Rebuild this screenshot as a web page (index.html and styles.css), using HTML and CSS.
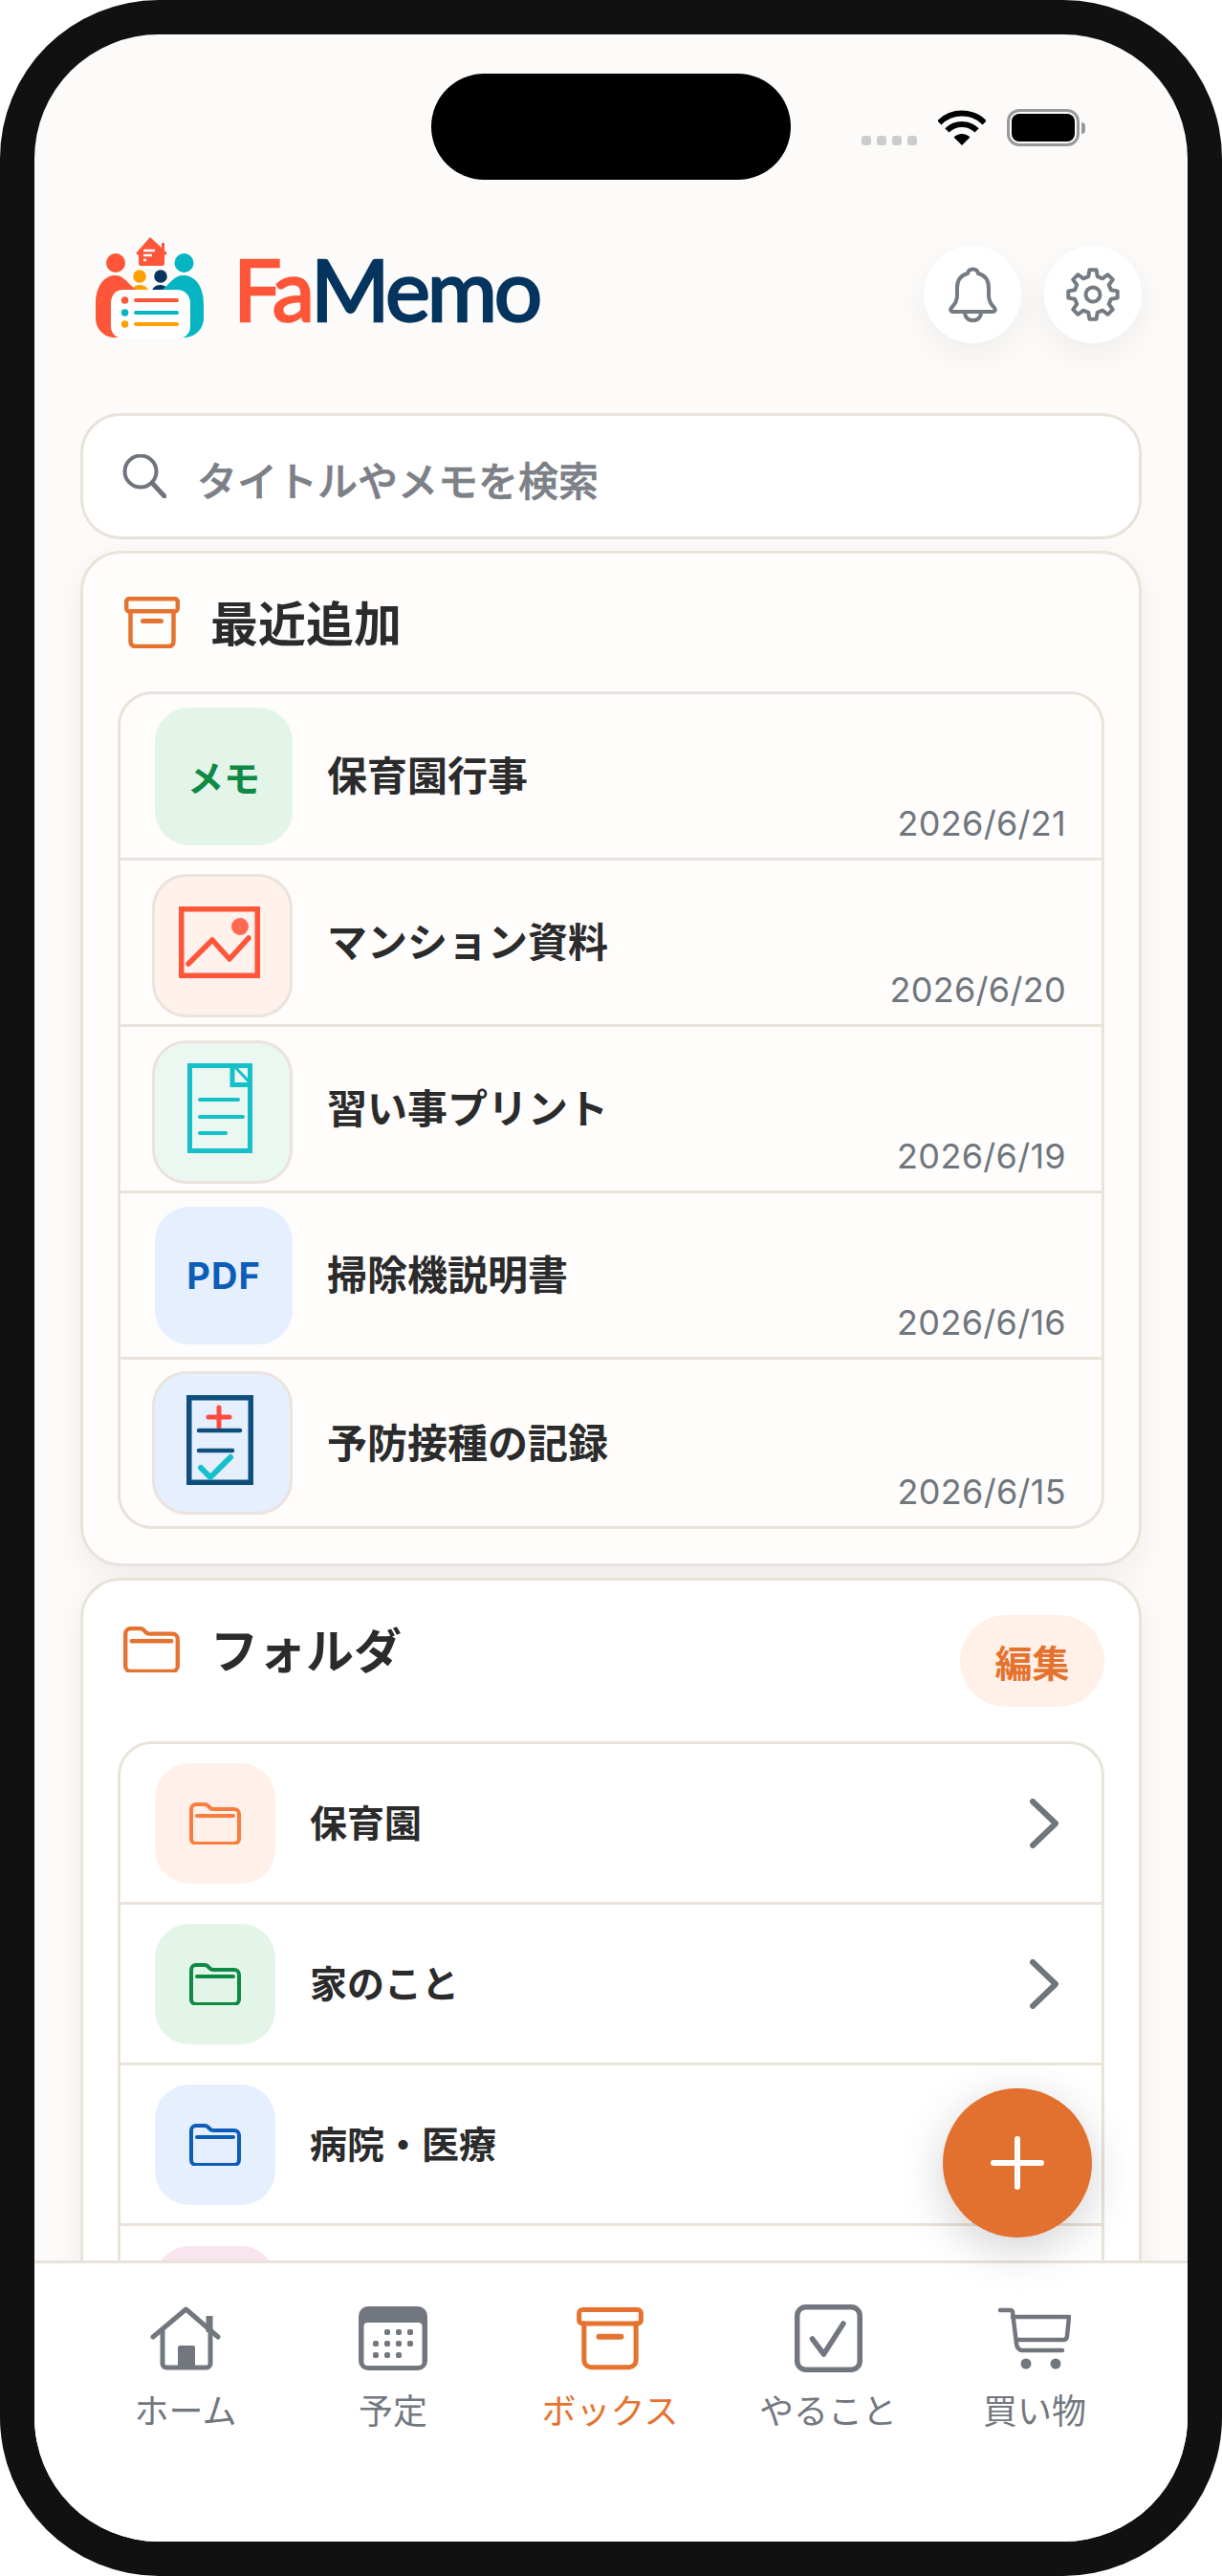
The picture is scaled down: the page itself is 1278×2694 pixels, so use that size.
FILE: index.html
```html
<!DOCTYPE html>
<html lang="ja">
<head>
  <meta charset="UTF-8" />
  <title>FaMemo</title>
  <meta name="viewport" content="width=device-width, initial-scale=1.0" />
  <link rel="stylesheet" href="styles.css">
</head>
<body>
  <div class="phone">
    <div class="screen">

      <div class="status-bar">
        <div class="island"></div>
        <div class="status-icons">
          <div class="signal"><span></span><span></span><span></span><span></span></div>
          <svg class="wifi" width="50" height="37" viewBox="0 0 50 37" fill="none" stroke="#000" stroke-width="6">
            <path d="M1.3 13.3a33.5 33.5 0 0 1 47.4 0" />
            <path d="M9.4 21.4a22 22 0 0 1 31.2 0" />
            <path d="M25 37l-8.5-8.5a12 12 0 0 1 17 0z" fill="#000" stroke="none" />
          </svg>
          <div class="battery"><div class="battery-level"></div></div>
          <div class="battery-tip"></div>
        </div>
      </div>

      <main class="content">
        <header class="app-header">
          <div class="logo">
            <svg width="113" height="105" viewBox="0 0 113 105">
              <path d="M57 0l12 11V6h3v8l3 3-3 2v9a2 2 0 0 1-2 2H47a2 2 0 0 1-2-2V19l-3-2z" fill="#ff5539" />
              <path d="M50 14h12M50 19h9M50 24h3" stroke="#fff" stroke-width="2.4" />
              <circle cx="21" cy="27" r="10" fill="#ff5539" />
              <circle cx="92.500" cy="27" r="10" fill="#05b5c2" />
              <circle cx="46" cy="41" r="6.800" fill="#ffa000" />
              <circle cx="68" cy="41" r="6.800" fill="#05355e" />
              <path d="M38 56c1-8 15-8 17 0z" fill="#ffa000" />
              <path d="M59 56c2-8 15-8 17 0z" fill="#05355e" />
              <path d="M0 70C0 50 10 40 20 40c10 0 13 8 22 15v50H20C8 105 0 95 0 85z" fill="#ff5539" />
              <path d="M113 70c0-20-10-30-21-30-10 0-14 8-22 15v50h22c13 0 21-10 21-20z" fill="#05b5c2" />
              <path d="M24 105c-5-2-8-6-8-12V69c0-8 5-14 13-14h56c8 0 14 6 14 14v24c0 6-3 10-8 12z" fill="#fff" />
              <circle cx="30.600" cy="66" r="3.800" fill="#ff5539" />
              <circle cx="30.600" cy="79" r="3.800" fill="#05b5c2" />
              <circle cx="30.600" cy="91" r="3.800" fill="#ffa000" />
              <path d="M42 66h43" stroke="#ff5539" stroke-width="4" stroke-linecap="round" />
              <path d="M42 79h43" stroke="#05b5c2" stroke-width="4" stroke-linecap="round" />
              <path d="M42 91h43" stroke="#ffa000" stroke-width="4" stroke-linecap="round" />
            </svg>
            <div class="logo-text"><span class="logo-fa">Fa</span><span class="logo-memo">Memo</span></div>
          </div>
          <div class="header-buttons">
            <button class="round-button">
              <svg width="53" height="58" viewBox="0 0 53 58" fill="none" stroke="#757b83" stroke-width="4" stroke-linejoin="round">
                <path d="M26.500 2.500c-3 0-5 2-5.500 4.500C13.500 9 10 15 10 22v8c0 6-2.500 9-6 13-1.500 2-.5 4 2 4h41c2.500 0 3.500-2 2-4-3.500-4-6-7-6-13v-8c0-7-3.500-13-11-15-.5-2.500-2.500-4.500-5.500-4.500z" />
                <path d="M18 47c0 6 3.500 9 8.500 9s8.500-3 8.500-9" />
              </svg>
            </button>
            <button class="round-button">
              <svg width="56" height="56" viewBox="0 0 56 56" fill="none" stroke="#757b83" stroke-width="4" stroke-linejoin="round">
                <path d="M23.300 9.100L24.400 2.300H31.600L32.700 9.100L38 11.300L43.600 7.200L48.800 12.400L44.700 18L46.900 23.300L53.700 24.400V31.600L46.900 32.700L44.700 38L48.800 43.600L43.600 48.800L38 44.700L32.700 46.900L31.600 53.700H24.400L23.300 46.900L18 44.700L12.400 48.800L7.200 43.600L11.300 38L9.100 32.700L2.300 31.600V24.400L9.100 23.300L11.300 18L7.200 12.400L12.400 7.200L18 11.300z" />
                <circle cx="28" cy="28" r="7.500" />
              </svg>
            </button>
          </div>
        </header>

        <div class="search-box">
          <svg width="46" height="46" viewBox="0 0 46 46" fill="none" stroke="#70757d" stroke-width="4" stroke-linecap="round">
            <circle cx="19" cy="18" r="16.500" />
            <path d="M31 30l13 14" stroke-width="5" />
          </svg>
          <span class="search-text">タイトルやメモを検索</span>
        </div>

        <section class="card card-recent">
          <div class="card-head">
            <div class="card-title">
              <svg width="58" height="54" viewBox="0 0 58 54" fill="none" stroke="#e5732f" stroke-width="4.500" stroke-linecap="round">
                <rect x="2.200" y="2.200" width="53.600" height="13" rx="3" />
                <path d="M6.500 15v32a5 5 0 0 0 5 5h35a5 5 0 0 0 5-5V15" />
                <path d="M19.500 25.500h19" stroke-width="5" />
              </svg>
              <h2>最近追加</h2>
            </div>
          </div>
          <div class="list">
            <div class="row recent-row">
              <div class="thumb thumb-green">メモ</div>
              <div class="row-title">保育園行事</div>
              <div class="row-date">2026/6/21</div>
            </div>
            <div class="row recent-row">
              <div class="thumb thumb-framed thumb-red">
                <svg width="85" height="75" viewBox="0 0 85 75" fill="none" stroke="#ff5539" stroke-width="5.500" stroke-linecap="round">
                  <rect x="2.750" y="2.750" width="79.500" height="69.500" />
                  <path d="M10 60l25-25 18 20 20-22" stroke-linejoin="round" />
                  <circle cx="64" cy="21" r="9" fill="#ff6a52" stroke="none" />
                </svg>
              </div>
              <div class="row-title">マンション資料</div>
              <div class="row-date">2026/6/20</div>
            </div>
            <div class="row recent-row">
              <div class="thumb thumb-framed thumb-mint">
                <svg width="68" height="94" viewBox="0 0 68 94" fill="none" stroke="#15c0c8" stroke-width="5" stroke-linecap="round">
                  <rect x="2.500" y="2.500" width="63" height="89" />
                  <rect x="47" y="2.500" width="18.500" height="20" />
                  <path d="M49 3l17 18" stroke-width="3" />
                  <path d="M13 38h40M13 56h45M13 73h27" stroke-width="4" />
                </svg>
              </div>
              <div class="row-title">習い事プリント</div>
              <div class="row-date">2026/6/19</div>
            </div>
            <div class="row recent-row">
              <div class="thumb thumb-blue thumb-pdf">PDF</div>
              <div class="row-title">掃除機説明書</div>
              <div class="row-date">2026/6/16</div>
            </div>
            <div class="row recent-row">
              <div class="thumb thumb-framed thumb-blue">
                <svg width="70" height="94" viewBox="0 0 70 94" fill="none" stroke="#0f4f7d" stroke-width="5.500" stroke-linecap="round">
                  <rect x="2.750" y="2.750" width="64.500" height="88.500" />
                  <path d="M34 13v20M23 23h22" stroke="#ff4b3e" stroke-width="5" />
                  <path d="M13 37h43M13 58h35" stroke-width="4.500" />
                  <path d="M15 76l10 10 21-21" stroke="#15c0c8" stroke-width="6" stroke-linejoin="round" />
                </svg>
              </div>
              <div class="row-title">予防接種の記録</div>
              <div class="row-date">2026/6/15</div>
            </div>
          </div>
        </section>

        <section class="card card-folders">
          <div class="card-head">
            <div class="card-title">
              <svg class="folder-head" width="59" height="48" viewBox="0 0 54 44" fill="none" stroke="#e5732f" stroke-width="4" stroke-linecap="round">
                <path d="M2 7a5 5 0 0 1 5-5h9a5 5 0 0 1 3.500 1.500l2 2a5 5 0 0 0 3.500 1.500H47a5 5 0 0 1 5 5v26a5 5 0 0 1-5 5H7a5 5 0 0 1-5-5z" />
                <path d="M8 14h38" />
              </svg>
              <h2>フォルダ</h2>
            </div>
            <button class="edit-button">編集</button>
          </div>
          <div class="list">
            <div class="row folder-row">
              <div class="thumb folder-thumb thumb-orange">
                <svg width="54" height="44" viewBox="0 0 54 44" fill="none" stroke="#f97d3f" stroke-width="4" stroke-linecap="round">
                  <path d="M2 7a5 5 0 0 1 5-5h9a5 5 0 0 1 3.500 1.500l2 2a5 5 0 0 0 3.500 1.500H47a5 5 0 0 1 5 5v26a5 5 0 0 1-5 5H7a5 5 0 0 1-5-5z" />
                  <path d="M8 14h38" />
                </svg>
              </div>
              <div class="row-title folder-name">保育園</div>
              <svg class="chevron" width="30" height="52" viewBox="0 0 30 52" fill="none" stroke="#70767e" stroke-width="6" stroke-linecap="round" stroke-linejoin="round"><path d="M3 3l24 23L3 49" /></svg>
            </div>
            <div class="row folder-row">
              <div class="thumb folder-thumb thumb-green">
                <svg width="54" height="44" viewBox="0 0 54 44" fill="none" stroke="#0e8a45" stroke-width="4" stroke-linecap="round">
                  <path d="M2 7a5 5 0 0 1 5-5h9a5 5 0 0 1 3.500 1.500l2 2a5 5 0 0 0 3.500 1.500H47a5 5 0 0 1 5 5v26a5 5 0 0 1-5 5H7a5 5 0 0 1-5-5z" />
                  <path d="M8 14h38" />
                </svg>
              </div>
              <div class="row-title folder-name">家のこと</div>
              <svg class="chevron" width="30" height="52" viewBox="0 0 30 52" fill="none" stroke="#70767e" stroke-width="6" stroke-linecap="round" stroke-linejoin="round"><path d="M3 3l24 23L3 49" /></svg>
            </div>
            <div class="row folder-row">
              <div class="thumb folder-thumb thumb-blue">
                <svg width="54" height="44" viewBox="0 0 54 44" fill="none" stroke="#0d5db8" stroke-width="4" stroke-linecap="round">
                  <path d="M2 7a5 5 0 0 1 5-5h9a5 5 0 0 1 3.500 1.500l2 2a5 5 0 0 0 3.500 1.500H47a5 5 0 0 1 5 5v26a5 5 0 0 1-5 5H7a5 5 0 0 1-5-5z" />
                  <path d="M8 14h38" />
                </svg>
              </div>
              <div class="row-title folder-name">病院・医療</div>
              <svg class="chevron" width="30" height="52" viewBox="0 0 30 52" fill="none" stroke="#70767e" stroke-width="6" stroke-linecap="round" stroke-linejoin="round"><path d="M3 3l24 23L3 49" /></svg>
            </div>
            <div class="row folder-row">
              <div class="thumb folder-thumb thumb-pink"></div>
            </div>
          </div>
        </section>
      </main>

      <button class="fab">
        <svg width="56" height="56" viewBox="0 0 56 56" stroke="#fff" stroke-width="6" stroke-linecap="round"><path d="M28 3v50M3 28h50" /></svg>
      </button>

      <nav class="tab-bar">
        <div class="tab">
          <svg width="74" height="67" viewBox="0 0 74 67" fill="none" stroke="#72777f" stroke-width="5" stroke-linecap="round" stroke-linejoin="round">
            <path d="M3 32L37.500 3 71 32" />
            <path d="M13 25v35a4 4 0 0 0 4 4h42a4 4 0 0 0 4-4V25" />
            <path d="M62 27V10" stroke-width="7" stroke-linecap="butt" />
            <rect x="29" y="41" width="18" height="24" rx="2" fill="#72777f" stroke="none" />
          </svg>
          <span>ホーム</span>
        </div>
        <div class="tab">
          <svg width="72" height="67" viewBox="0 0 72 67">
            <rect width="72" height="67" rx="10" fill="#72777f" />
            <rect x="5.500" y="17" width="61" height="45" rx="4" fill="#fff" />
            <g fill="#72777f">
              <rect x="27" y="24" width="6" height="6" rx="2" /><rect x="39" y="24" width="6" height="6" rx="2" /><rect x="51" y="24" width="6" height="6" rx="2" />
              <rect x="15" y="36" width="6" height="6" rx="2" /><rect x="27" y="36" width="6" height="6" rx="2" /><rect x="39" y="36" width="6" height="6" rx="2" /><rect x="51" y="36" width="6" height="6" rx="2" />
              <rect x="15" y="48" width="6" height="6" rx="2" /><rect x="27" y="48" width="6" height="6" rx="2" /><rect x="39" y="48" width="6" height="6" rx="2" />
            </g>
          </svg>
          <span>予定</span>
        </div>
        <div class="tab tab-active">
          <svg width="70" height="67" viewBox="0 0 58 54" fill="none" stroke="#e5732f" stroke-width="4.200" stroke-linecap="round">
            <rect x="2.200" y="2.200" width="53.600" height="12" rx="3" />
            <path d="M6.500 14v32a6 6 0 0 0 6 6h33a6 6 0 0 0 6-6V14" />
            <path d="M19.500 25.500h19" stroke-width="5" />
          </svg>
          <span>ボックス</span>
        </div>
        <div class="tab">
          <svg class="tab-check" width="71" height="71" viewBox="0 0 71 71" fill="none" stroke="#72777f" stroke-width="5.500" stroke-linecap="round" stroke-linejoin="round">
            <rect x="2.750" y="2.750" width="65.500" height="65.500" rx="9" />
            <path d="M18.500 36l12 16L51 20" />
          </svg>
          <span>やること</span>
        </div>
        <div class="tab">
          <svg width="76" height="67" viewBox="0 0 76 65" fill="none" stroke="#72777f" stroke-width="4.500" stroke-linecap="round" stroke-linejoin="round">
            <path d="M2 3h11c1 0 2 1 2 2l4 33c.3 4 3 7 6 7h42" />
            <path d="M15 10h59l-2 20c-.3 3-2 4-4 4H19" />
            <circle cx="29" cy="59" r="5.500" fill="#72777f" stroke="none" />
            <circle cx="60" cy="59" r="5.500" fill="#72777f" stroke="none" />
          </svg>
          <span>買い物</span>
        </div>
      </nav>

    </div>
  </div>
</body>
</html>
```

FILE: styles.css
```css
* {
  box-sizing: border-box;
}
body {
  margin: 0;
  background: #fff;
  font-family: Inter, "Noto Sans CJK JP", sans-serif;
  color: #2b2b2b;
}
button {
  border: none;
  padding: 0;
  font-family: inherit;
  cursor: pointer;
}
.phone {
  width: 1278px;
  height: 2694px;
  padding: 36px;
  background: #111;
  border-radius: 166px;
}
.screen {
  position: relative;
  display: flex;
  flex-direction: column;
  height: 100%;
  overflow: hidden;
  background: #fcfbf9;
  border-radius: 130px;
}

/* status bar */
.status-bar {
  display: flex;
  flex-shrink: 0;
  height: 152px;
  padding: 41px 0 0 415px;
}
.island {
  width: 376px;
  height: 111px;
  background: #000;
  border-radius: 56px;
}
.status-icons {
  display: flex;
  align-items: center;
  height: 39px;
  margin: 37px 0 0 74px;
}
.signal {
  display: flex;
  gap: 6px;
  align-self: flex-end;
  margin: 0 22px 1px 0;
}
.signal span {
  width: 10px;
  height: 10px;
  background: #ccc;
  border-radius: 3px;
}
.wifi {
  margin-right: 22px;
}
.battery {
  width: 76px;
  height: 39px;
  padding: 2px;
  border: 3.5px solid #999;
  border-radius: 13px;
}
.battery-level {
  height: 100%;
  background: #000;
  border-radius: 8px;
}
.battery-tip {
  width: 4px;
  height: 12px;
  margin-left: 2px;
  background: #999;
  border-radius: 0 6px 6px 0;
}

/* header */
.content {
  flex: 1;
  min-height: 0;
  padding: 0 48px;
  overflow: hidden;
}
.app-header {
  display: flex;
  justify-content: space-between;
  align-items: flex-start;
  height: 113px;
  margin: 59px 0 72px;
}
.logo {
  display: flex;
  align-items: center;
  margin-left: 16px;
}
.logo-text {
  margin: 2px 0 0 31px;
  font-family: Lato, sans-serif;
  font-size: 89px;
  font-weight: 400;
  line-height: 105px;
  letter-spacing: -3.2px;
  white-space: nowrap;
  -webkit-text-stroke: 2.5px;
}
.logo-fa {
  color: #ff5539;
}
.logo-memo {
  color: #05355e;
}
.header-buttons {
  display: flex;
  gap: 24px;
  margin-top: 10px;
}
.round-button {
  display: flex;
  justify-content: center;
  align-items: center;
  width: 102px;
  height: 102px;
  background: #fff;
  border-radius: 50%;
  box-shadow: 0 12px 36px rgba(0, 0, 0, 0.06);
}

/* search */
.search-box {
  display: flex;
  align-items: center;
  gap: 32px;
  height: 132px;
  margin-bottom: 12px;
  padding-left: 41px;
  background: #fff;
  border: 3px solid #e9e3da;
  border-radius: 42px;
}
.search-text {
  margin-top: 4px;
  font-size: 42px;
  font-weight: 500;
  color: #7c8087;
  -webkit-text-stroke: 0.6px;
}

/* cards */
.card {
  margin-bottom: 12px;
  padding: 36px;
  border: 3px solid #e9e3da;
  border-radius: 42px;
  box-shadow: 0 12px 36px rgba(0, 0, 0, 0.06);
}
.card-recent {
  background: #fefdfb;
}
.card-folders {
  background: #fff;
}
.card-head {
  display: flex;
  justify-content: space-between;
  align-items: flex-start;
  margin-bottom: 36px;
}
.card-title {
  display: flex;
  align-items: center;
  gap: 32px;
  height: 72px;
  padding-left: 7px;
}
.card-title h2 {
  margin: 4px 0 0;
  font-size: 50px;
  font-weight: 700;
  line-height: 72px;
}
.folder-head {
  margin-left: -1px;
}
.edit-button {
  width: 151px;
  height: 96px;
  background: #fff1e8;
  border-radius: 48px;
  font-size: 39px;
  font-weight: 700;
  color: #e5732f;
}

/* list rows */
.list {
  border: 3px solid #e9e3da;
  border-radius: 36px;
}
.row {
  display: flex;
  align-items: center;
  border-bottom: 3px solid #e9e3da;
}
.row:last-child {
  border-bottom: none;
}
.recent-row {
  height: 174px;
  padding: 0 37px 0 36px;
}
.folder-row {
  height: 168px;
  padding: 0 45px 0 36px;
}
.thumb {
  display: flex;
  flex-shrink: 0;
  justify-content: center;
  align-items: center;
  width: 144px;
  height: 144px;
  border-radius: 36px;
  font-size: 38px;
  font-weight: 700;
}
.thumb-framed {
  width: 147px;
  height: 150px;
  margin: 6px 0 0 -3px;
  border: 3px solid #ebe3dd;
}
.row:last-child .thumb-framed {
  margin-top: 0;
}
.thumb-framed svg {
  margin: 0 6px 7px 0;
}
.folder-thumb {
  width: 126px;
  height: 126px;
}
.thumb-green {
  background: #e3f4e9;
  color: #0e8a45;
}
.thumb-red {
  background: #fff1eb;
}
.thumb-mint {
  background: #ebf7f1;
}
.thumb-blue {
  background: #e5effe;
}
.thumb-orange {
  background: #fff1e9;
}
.thumb-pink {
  background: #f9e5ef;
}
.thumb-pdf {
  color: #0d5db8;
  letter-spacing: 1px;
}
.row-title {
  flex: 1;
  margin: 0 0 6px 36px;
  font-size: 42px;
  font-weight: 700;
  white-space: nowrap;
}
.folder-name {
  font-size: 39px;
}
.row-date {
  align-self: flex-end;
  margin-bottom: 9px;
  font-size: 36px;
  line-height: 54px;
  letter-spacing: 0.3px;
  color: #6f767e;
}

/* floating add button */
.fab {
  position: absolute;
  right: 100px;
  bottom: 318px;
  display: flex;
  justify-content: center;
  align-items: center;
  width: 156px;
  height: 156px;
  background: #e2702e;
  border-radius: 50%;
  box-shadow: 0 12px 48px rgba(0, 0, 0, 0.18);
}

/* bottom tabs */
.tab-bar {
  display: grid;
  grid-template-columns: 216px 218px 236px 220px 212px;
  flex-shrink: 0;
  height: 294px;
  padding: 45px 0 0 50px;
  background: #fff;
  border-top: 3px solid #e9e3da;
}
.tab {
  display: flex;
  flex-direction: column;
  align-items: center;
  gap: 16px;
  font-size: 36px;
  line-height: 54px;
  color: #72777f;
}
.tab svg {
  height: 67px;
}
.tab svg.tab-check {
  height: 71px;
  margin: -2px 0;
}
.tab-active {
  color: #e5732f;
}
```
